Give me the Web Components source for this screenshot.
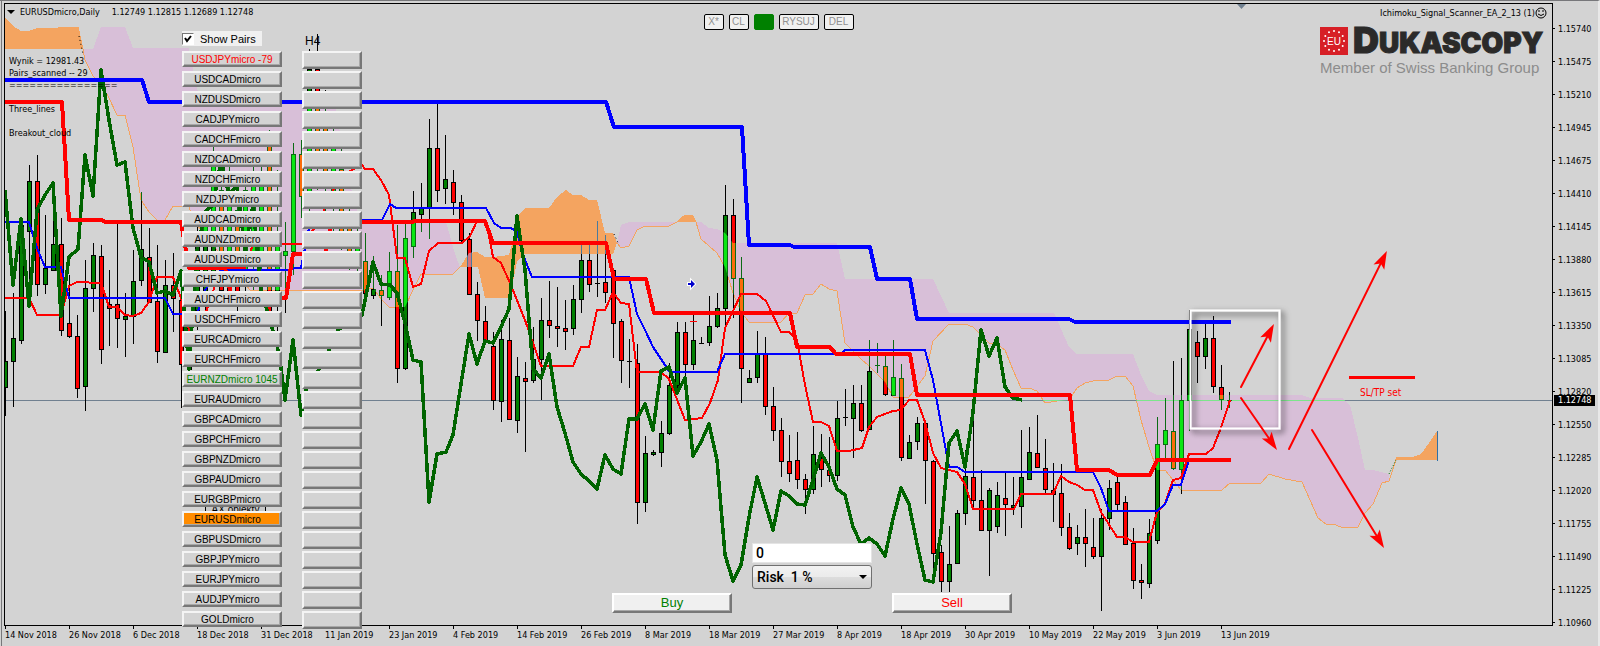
<!DOCTYPE html>
<html lang="en">
<head>
<meta charset="utf-8">
<title>EURUSDmicro,Daily</title>
<style>
  html, body { height: 100%; }
  body {
    margin: 0;
    background: #d3d3d3;
    color: #000;
    font: 9px/12px "DejaVu Sans Condensed", "Noto Sans", sans-serif;
  }
</style>
</head>
<body>
<chart-window>
  <price-chart slot="plot"></price-chart>
  <chart-title slot="title" symbol="EURUSDmicro,Daily" prices="1.12749 1.12815 1.12689 1.12748"></chart-title>
  <chart-comment slot="comment"></chart-comment>
  <pair-list slot="pairs"></pair-list>
  <object-toolbar slot="toolbar"></object-toolbar>
  <order-panel slot="order"></order-panel>
  <broker-logo slot="logo" advisor="Ichimoku_Signal_Scanner_EA_2_13 (1)"></broker-logo>
  <price-axis slot="prices" current="1.12748"></price-axis>
  <time-axis slot="times"></time-axis>
</chart-window>

<script>
class BaseElement extends HTMLElement {
  constructor() {
    super();
    this.attachShadow({ mode: 'open' });
  }

  connectedCallback() {
    this.shadowRoot.innerHTML = `<style>${this.styles}</style>${this.createHTML()}`;
  }
}

class ChartWindow extends BaseElement {
  get styles() {
    return `
      :host {
        display: grid;
        grid-template-columns: minmax(0, 1fr) 45px;
        grid-template-rows: minmax(0, 1fr) 20px;
        box-sizing: border-box;
        min-height: 100vh;
        padding: 3px 0 0 5px;
        border-top: 1px solid #77777a;
        border-right: 2px solid #e8e8e8;
        position: relative;
      }
      :host::before {
        content: '';
        position: absolute;
        inset: 0 auto 0 1px;
        border-left: 1px solid #77777a;
      }
      .plot {
        position: relative;
        border: 1px solid #000;
        margin-top: -1px;
        margin-left: -1px;
      }
      .layer { position: absolute; }
      .plot-area { inset: 0; }
      .title { left: 2px; top: 2px; }
      .comment { left: 4px; top: 51px; }
      .pairs { left: 177px; top: 27px; }
      .toolbar { left: 0; right: 0; top: 10px; }
      .order { left: 607px; top: 539px; }
      .logo { right: 5px; top: 2px; }
      .prices { grid-row: 1 / 3; grid-column: 2; }
    `;
  }

  createHTML() {
    return `
      <div class="plot">
        <div class="layer plot-area"><slot name="plot"></slot></div>
        <div class="layer title"><slot name="title"></slot></div>
        <div class="layer comment"><slot name="comment"></slot></div>
        <div class="layer toolbar"><slot name="toolbar"></slot></div>
        <div class="layer pairs"><slot name="pairs"></slot></div>
        <div class="layer order"><slot name="order"></slot></div>
        <div class="layer logo"><slot name="logo"></slot></div>
      </div>
      <div class="prices"><slot name="prices"></slot></div>
      <div><slot name="times"></slot></div>
    `;
  }
}

class ChartTitle extends BaseElement {
  get styles() {
    return `
      :host { display: flex; align-items: center; white-space: nowrap; }
      svg { width: 8px; height: 4px; margin-right: 5px; }
      .symbol { margin-right: 12px; }
    `;
  }

  createHTML() {
    return `
      <svg viewBox="0 0 8 4"><path d="M0 0h8L4 4z"/></svg>
      <span class="symbol">${this.getAttribute('symbol')}</span>
      <span>${this.getAttribute('prices')}</span>
    `;
  }
}

class ChartComment extends BaseElement {
  get styles() {
    return `
      :host { display: grid; grid-auto-rows: 12px; white-space: pre; }
    `;
  }

  createHTML() {
    const lines = ['Wynik = 12981.43', 'Pairs_scanned -- 29', '='.repeat(16), '', 'Three_lines', '', 'Breakout_cloud'];
    return lines.map((line) => `<span>${line}</span>`).join('');
  }
}

class PairList extends BaseElement {
  get styles() {
    return `
      :host {
        display: grid;
        grid-template-columns: 100px 60px;
        column-gap: 20px;
        row-gap: 4px;
        font: 10px/12px "Liberation Sans", Arial, sans-serif;
        position: relative;
      }
      label {
        display: flex;
        align-items: center;
        gap: 6px;
        width: 80px;
        height: 15px;
        font-size: 11px;
        background: #f0f0f0;
      }
      input {
        appearance: none;
        box-sizing: border-box;
        width: 12px;
        height: 12px;
        margin: 0;
        border: 1px solid;
        border-color: #777 #fff #fff #777;
        background: #fff url("data:image/svg+xml,%3Csvg xmlns='http://www.w3.org/2000/svg' viewBox='0 0 10 10'%3E%3Cpath d='M2 4l2 3 4-5' fill='none' stroke='%23000' stroke-width='2'/%3E%3C/svg%3E");
      }
      .head { height: 16px; }
      .frame { align-self: end; padding-left: 3px; font-size: 12px; }
      ul { display: grid; margin: 0; padding: 0; list-style: none; grid-auto-rows: 20px; }
      .pairs { position: relative; }
      button {
        display: block;
        box-sizing: border-box;
        width: 100%;
        height: 16px;
        padding: 1px 9px 0 0;
        border: 2px solid;
        border-color: #f4f4f4 #777 #777 #f4f4f4;
        background: #d3d3d3;
        box-shadow: inset -1px -1px #a8a8a8;
        color: #000;
        font: inherit;
        white-space: nowrap;
      }
      .signal button { height: 18px; }
      .sell, .buy { padding-right: 0; }
      .sell { color: #f00; }
      .buy { color: #008000; }
      .current { background: #ff8c00; }
      .hidden-objects {
        position: absolute;
        left: 23px;
        top: 471px;
        width: 61px;
        padding: 0;
        border: 1px solid #000;
        background: #c8c8c8;
        box-shadow: none;
      }
    `;
  }

  createHTML() {
    const pairs = [
      'USDJPY', 'USDCAD', 'NZDUSD', 'CADJPY', 'CADCHF', 'NZDCAD', 'NZDCHF', 'NZDJPY', 'AUDCAD', 'AUDNZD',
      'AUDUSD', 'CHFJPY', 'AUDCHF', 'USDCHF', 'EURCAD', 'EURCHF', 'EURNZD', 'EURAUD', 'GBPCAD', 'GBPCHF',
      'GBPNZD', 'GBPAUD', 'EURGBP', 'EURUSD', 'GBPUSD', 'GBPJPY', 'EURJPY', 'AUDJPY', 'GOLD',
    ];
    const states = {
      USDJPY: ['sell', ' -79'],
      EURNZD: ['buy', ' 1045'],
      EURUSD: ['current', ''],
    };
    const items = pairs.map((pair) => {
      const [state, points] = states[pair] || ['', ''];
      return `<li><button class="${state}">${pair}micro${points}</button></li>`;
    });
    const signals = pairs.map((pair) => `<li class="signal"><button aria-label="${pair} H4"></button></li>`);
    return `
      <button class="hidden-objects" tabindex="-1">AX obiekty</button>
      <div class="head"><label for="show"><input id="show" type="checkbox" checked>Show Pairs</label></div>
      <span class="frame">H4</span>
      <ul class="pairs">${items.join('')}</ul>
      <ul>${signals.join('')}</ul>
    `;
  }
}

class ObjectToolbar extends BaseElement {
  get styles() {
    return `
      :host { display: flex; justify-content: center; gap: 5px; }
      button {
        box-sizing: border-box;
        width: 20px;
        height: 16px;
        padding: 0;
        border: 1px solid #000;
        border-radius: 2px;
        background: #f0f0f0;
        color: #909090;
        font: 10px/12px "Liberation Sans", Arial, sans-serif;
      }
      .wide { width: 40px; }
      .mid { width: 30px; }
      .on { background: #008000; border-color: #008000; }
    `;
  }

  createHTML() {
    return `
      <button>X*</button>
      <button>CL</button>
      <button class="on" aria-label="on"></button>
      <button class="wide">RYSUJ</button>
      <button class="mid">DEL</button>
    `;
  }
}

class OrderPanel extends BaseElement {
  get styles() {
    return `
      :host {
        display: grid;
        grid-template-columns: repeat(3, 120px);
        grid-template-rows: 20px 24px 22px;
        column-gap: 20px;
        row-gap: 2px;
        font: 500 14px/18px Roboto, sans-serif;
      }
      input, select {
        grid-column: 2;
        box-sizing: border-box;
        width: 100%;
        margin: 0;
        padding: 0 4px;
        color: #000;
        font: inherit;
      }
      input { border: 1px solid #e4e4e4; background: #fff; padding: 0 3px; }
      select {
        appearance: none;
        border: 1px solid #707070;
        border-radius: 3px;
        background:
          url("data:image/svg+xml,%3Csvg xmlns='http://www.w3.org/2000/svg' viewBox='0 0 8 4'%3E%3Cpath d='M0 0h8L4 4z'/%3E%3C/svg%3E") right 4px center / 8px 4px no-repeat,
          linear-gradient(#f2f2f2, #ebebeb 50%, #dddddd 50%, #cfcfcf);
      }
      button {
        grid-row: 3;
        align-self: end;
        box-sizing: border-box;
        height: 20px;
        padding: 0;
        border: 2px solid;
        border-color: #fff #777 #777 #fff;
        background: #f0f0f0;
        box-shadow: inset -1px -1px #a8a8a8;
        font: 13px/16px "Liberation Sans", Arial, sans-serif;
      }
      .buy { grid-column: 1; color: #008000; }
      .sell { grid-column: 3; color: #f00; }
    `;
  }

  createHTML() {
    return `
      <input type="text" value="0" aria-label="Lots">
      <select aria-label="Risk"><option>Risk&nbsp; 1 %</option></select>
      <button class="buy">Buy</button>
      <button class="sell">Sell</button>
    `;
  }
}

class BrokerLogo extends BaseElement {
  get styles() {
    return `
      :host { display: grid; width: 227px; row-gap: 8px; }
      .advisor { display: flex; justify-content: flex-end; align-items: center; height: 13px; }
      .face { width: 12px; height: 12px; }
      .brand { display: flex; align-items: center; gap: 5px; height: 28px; }
      .flag { flex: none; width: 28px; height: 28px; }
      .name {
        color: #2b2a29;
        font: 900 28px/28px Inter, "Open Sans", sans-serif;
        -webkit-text-stroke: 1px #2b2a29;
        white-space: nowrap;
      }
      .name::first-letter { font-size: 36px; }
      .member {
        color: #8c8c8c;
        font: 15px/18px "Liberation Sans", Arial, sans-serif;
        margin-top: -4px;
      }
    `;
  }

  createHTML() {
    const stars = Array.from({ length: 12 }, (_, i) => {
      const angle = i * Math.PI / 6;
      return `<circle cx="${(14 + 10 * Math.sin(angle)).toFixed(1)}" cy="${(14 - 10 * Math.cos(angle)).toFixed(1)}" r="1"/>`;
    });
    return `
      <div class="advisor">
        ${this.getAttribute('advisor')}
        <svg class="face" viewBox="0 0 12 12" fill="none" stroke="#000">
          <circle cx="6" cy="6" r="5"/>
          <path d="M4 3v2M8 3v2M3 7q3 3 6 0"/>
        </svg>
      </div>
      <div class="brand">
        <svg class="flag" viewBox="0 0 28 28">
          <rect width="28" height="28" fill="#d71f26"/>
          <g fill="#fff">${stars.join('')}</g>
          <text x="14" y="18" text-anchor="middle" fill="#fff" font-family="Liberation Sans" font-size="10">EU</text>
        </svg>
        <div class="name">DUKASCOPY</div>
      </div>
      <div class="member">Member of Swiss Banking Group</div>
    `;
  }
}

class PriceAxis extends BaseElement {
  get styles() {
    return `
      :host { display: block; position: relative; padding-top: 8px; }
      ol { margin: 0; padding: 0; list-style: none; }
      li { display: flex; align-items: center; gap: 3px; height: 33px; }
      li::before { content: ''; width: 2px; height: 1px; background: #000; }
      .current {
        position: absolute;
        left: 1px;
        top: 391px;
        width: 41px;
        box-sizing: border-box;
        padding-left: 4px;
        line-height: 11px;
        background: #000;
        color: #fff;
      }
    `;
  }

  createHTML() {
    const prices = [
      '1.15740', '1.15475', '1.15210', '1.14945', '1.14675', '1.14410', '1.14145', '1.13880', '1.13615', '1.13350',
      '1.13085', '1.12820', '1.12550', '1.12285', '1.12020', '1.11755', '1.11490', '1.11225', '1.10960',
    ];
    return `
      <ol>${prices.map((price) => `<li>${price}</li>`).join('')}</ol>
      <span class="current">${this.getAttribute('current')}</span>
    `;
  }
}

class TimeAxis extends BaseElement {
  get styles() {
    return `
      ol { display: flex; margin: 0; padding: 0; list-style: none; }
      li { flex: 0 0 64px; white-space: nowrap; }
      li::before { content: ''; display: block; width: 1px; height: 3px; background: #000; }
    `;
  }

  createHTML() {
    const dates = [
      '14 Nov 2018', '26 Nov 2018', '6 Dec 2018', '18 Dec 2018', '31 Dec 2018', '11 Jan 2019', '23 Jan 2019',
      '4 Feb 2019', '14 Feb 2019', '26 Feb 2019', '8 Mar 2019', '18 Mar 2019', '27 Mar 2019', '8 Apr 2019',
      '18 Apr 2019', '30 Apr 2019', '10 May 2019', '22 May 2019', '3 Jun 2019', '13 Jun 2019',
    ];
    return `<ol>${dates.map((date) => `<li>${date}</li>`).join('')}</ol>`;
  }
}

// one bar every 8px from x = 5: high, low, body top, body bottom, direction
const BARS = `
311 416 361 387 g|293 407 338 361 g|218 344 225 340 g|165 298 181 231 g|155 296 181 284 r|215 294 268 284 g|208 271 244 270 g|218 336 244 330 r
275 338 323 336 r|315 398 336 388 r|260 411 288 386 g|243 312 255 288 g|245 364 256 349 r|270 346 304 308 r|224 348 304 318 r|293 357 316 319 g
250 344 281 316 g|192 286 249 280 g|228 303 257 302 r|245 363 301 351 r|260 352 285 352 g|253 332 285 298 r|298 408 300 364 r|318 370 320 369 g
225 330 240 310 g|215 320 225 300 g|147 300 160 285 g|160 305 190 290 r|160 300 200 290 g|190 312 210 300 r|180 305 190 275 g|165 290 185 265 g
160 280 175 255 g|130 325 145 314 r|170 345 245 300 g|222 313 251 255 g|143 275 154 251 g|140 218 154 196 r|49 220 69 200 g|34 190 69 160 r
90 215 128 180 r|120 240 140 200 g|140 250 169 235 r|205 270 215 258 r|225 280 240 260 g|233 297 261 293 r|256 299 289 295 g|275 326 290 295 r
252 300 271 297 g|225 383 271 368 r|223 370 238 368 g|191 258 212 246 g|183 232 208 214 g|119 239 148 207 g|103 202 148 190 r|135 204 179 188 g
170 215 182 202 r|195 244 202 240 r|233 295 239 294 r|282 341 294 320 r|306 341 321 341 r|332 410 346 400 r|320 422 339 401 g|318 420 340 419 r
357 433 376 420 g|362 452 378 381 r|327 383 359 380 g|298 400 320 359 g|281 338 320 325 r|287 347 326 328 r|300 350 328 331 r|285 335 299 328 g
245 313 260 299 g|245 292 260 284 r|221 297 283 284 g|235 303 282 292 r|268 358 270 323 r|319 383 321 360 r|339 388 361 362 g|344 524 363 502 r
436 512 453 502 g|450 456 452 454 g|421 467 433 452 g|363 435 385 433 g|322 394 332 385 g|322 385 332 364 r|315 370 340 364 g|337 344 343 344 g
296 346 326 342 g|293 328 308 326 g|185 330 215 308 g|199 318 215 278 r|257 403 278 368 r|370 383 378 382 g|331 383 354 377 g|337 415 354 406 r
387 441 406 430 r|418 477 430 461 r|435 482 461 473 r|432 489 460 479 r|474 514 479 489 r|426 494 454 489 g|434 487 458 469 r|437 482 470 475 r
401 481 418 475 g|389 426 417 418 g|385 458 403 418 g|385 432 403 430 r|340 430 371 429 g|343 373 365 366 g|356 396 366 394 r|340 396 377 395 g
364 461 378 457 r|435 459 442 458 g|417 450 423 441 g|420 504 423 460 r|460 568 461 553 r|545 592 552 581 r|526 592 564 581 g|510 563 513 563 g
450 525 476 513 g|413 510 477 500 r|470 530 500 530 r|488 576 490 530 g|482 533 495 526 g|473 536 498 504 r|477 515 505 507 g|430 528 477 506 g
427 480 452 479 g|415 468 453 467 r|439 493 468 489 r|463 522 490 494 r|464 536 493 527 r|513 550 527 548 r|525 555 537 543 g|509 567 537 543 r
518 559 547 556 r|509 611 518 556 g|480 530 488 518 g|475 510 482 504 r|496 545 502 544 r|528 589 543 580 r|564 599 580 582 r|519 588 533 583 g
417 544 444 540 g|398 458 430 444 g|361 470 431 468 r|358 494 400 469 g|310 431 329 400 g|331 383 342 356 r|323 369 338 356 g|316 393 338 386 r
365 410 387 399 r|392 408 400 401 g
`.trim().split(/[|\n]/).map((bar) => bar.split(' '));

const LINES = {
  trendBlue: '5,80 142,80 149,102 606,102 614,127 742,127 749,245 790,245 794,247 870,247 877,279 910,279 917,319 1069,319 1075,322 1231,322',
  trendRed: '5,102 62,102 69,220 101,220 106,222 181,222 189,268 225,268 232,298 286,298 293,254 325,254 332,222 412,222 415,221 485,221 493,243 606,243 614,279 646,279 654,313 790,313 797,347 830,347 836,354 910,354 917,395 1070,395 1077,470 1109,470 1117,475 1150,475 1157,460 1231,460',
  kijun: '5,222 29,222 37,248 45,267 61,267 69,298 165,298 173,314 197,314 205,290 221,270 290,270 295,268 301,268 309,228 325,220 382,220 390,204 396,208 486,208 494,223 501,228 511,228 517,232 523,255 532,277 629,277 637,314 645,330 653,347 669,371 672,372 717,372 725,354 840,354 845,350 925,350 933,380 949,467 957,467 965,472 1093,472 1101,488 1109,511 1157,511 1165,504 1173,485 1181,485 1189,460',
  tenkan: '5,298 29,298 37,315 61,315 69,286 77,282 101,283 109,307 117,307 125,315 133,316 141,313 149,302 157,277 173,277 181,298 189,330 205,315 221,268 245,268 253,244 302,244 317,225 333,190 350,171 362,165 365,169 373,169 381,180 389,195 397,258 405,258 413,287 421,284 429,251 438,243 462,243 470,236 477,221 486,221 493,257 501,263 510,283 525,320 541,366 573,366 581,347 589,347 597,310 605,310 613,292 621,303 629,304 637,372 661,372 669,379 685,420 702,418 710,403 718,380 725,328 741,294 757,294 766,301 781,332 789,332 797,340 805,385 813,422 821,422 829,426 837,451 849,451 862,448 869,427 877,417 893,411 901,410 909,400 917,400 925,422 933,453 941,468 957,472 965,484 973,509 1014,509 1021,494 1053,494 1061,476 1069,482 1077,485 1085,490 1093,490 1101,512 1117,537 1125,537 1133,542 1149,542 1157,512 1165,504 1173,480 1181,478 1189,454 1206,454 1213,448 1222,425 1230,400',
  chikou: '5,190 13,285 21,219 29,306 37,210 45,195 53,183 61,316 69,257 78,249 85,155 93,196 101,70 109,120 117,165 125,162 133,228 141,257 149,262 157,293 165,291 173,295 181,271 189,369 197,250 205,212 213,205 221,160 229,195 237,185 245,250 253,205 261,290 270,320 278,350 281,368 285,400 293,340 301,415 306,390 320,368 330,348 338,330 362,315 373,262 381,284 390,285 397,293 405,323 413,360 421,362 429,502 437,454 446,452 453,435 461,384 469,334 477,364 485,341 493,343 501,327 509,309 517,216 525,270 533,369 541,378 549,354 557,407 565,433 573,462 581,474 589,481 597,489 605,455 613,469 621,474 629,419 637,419 645,404 653,430 661,371 669,367 677,393 685,378 693,456 701,442 709,424 717,460 725,555 733,581 741,565 749,517 757,477 765,503 773,530 781,491 789,496 797,504 805,505 813,480 821,453 829,467 837,489 845,495 853,527 861,544 869,538 877,544 885,556 893,519 901,488 909,504 917,544 925,580 933,582 941,532 949,443 957,431 965,467 973,412 981,330 989,356 997,338 1005,387 1013,398 1022,400',
  spanA: '78,27 83,49 85,60 93,76 101,84 109,98 117,115 125,115 133,147 141,200 149,212 157,220 165,220 173,206 189,206 193,220 225,260 250,290 310,290 362,291 373,288 381,299 389,307 405,307 413,290 421,274 453,274 460,267',
  spanA2: '617,243 621,248 629,246 637,230 645,226 669,226 677,222 685,215 693,216 696,222 701,239 717,253 725,267 733,293 741,312 749,322 781,322 789,313 797,313 805,295 813,294 821,284 829,289 837,291 845,343 861,359 869,366 885,382 893,397 909,397 925,376 933,341 949,324 965,324 973,327 989,343 997,344 1005,350 1013,370 1021,388 1029,388 1037,391 1045,403 1057,401 1069,400 1077,388 1085,383 1093,381 1109,380 1117,376 1125,376 1133,386 1141,420 1149,447 1157,470 1165,470 1181,490 1222,490 1230,483 1261,483 1269,474 1285,479 1302,482 1318,518 1326,524 1333,524 1341,527 1358,527 1365,513 1373,504 1382,483 1389,481 1397,457 1413,457',
};

const reversed = (points) => points.split(' ').reverse().join(' ');

const BEAR_CLOUDS = [
  `83,49 93,49 101,27 125,27 133,48 189,48 193,70 200,101 335,101 345,165 360,222 446,222 455,254 ${reversed(LINES.spanA)}`,
  `617,243 621,225 629,222 701,222 709,228 717,229 725,233 733,243 837,243 845,279 933,279 949,313 1054,313 1069,347 1077,354 1133,354 1141,375 1149,391 1157,395 1302,395 1310,398 1342,398 1350,405 1358,438 1365,470 1373,470 1381,472 1389,474 1389,481 ${reversed(LINES.spanA2).replace('1413,457 1397,457 ', '').replace('685,215 ', '').replace('693,216 ', '')}`,
];

const BULL_CLOUDS = [
  '5,18 13,26 21,31 29,31 37,28 78,27 83,49 5,49',
  '460,267 469,253 477,252 485,257 493,257 509,255 513,240 517,216 525,208 549,208 557,197 566,190 573,195 581,195 589,200 597,200 605,233 613,233 617,243 613,254 525,254 517,261 513,282 509,298 485,298 478,267',
  '677,222 685,215 693,216 696,222',
  '1397,457 1413,457 1421,454 1429,443 1437,431 1437,460 1395,460',
];

class PriceChart extends BaseElement {
  get styles() {
    return `
      :host { display: block; height: 100%; }
      svg { display: block; width: 100%; height: 100%; }
      .line { fill: none; stroke-linejoin: round; }
      .px { shape-rendering: crispEdges; }
      text { font-size: 10px; }
    `;
  }

  createBars(edge, up, down) {
    const bars = BARS.map(([high, low, top, bottom, side], i) => {
      const x = 5 + i * 8;
      const height = bottom - top;
      const body = height > 1
        ? `<rect x="${x - 1.5}" y="${+top + 0.5}" width="4" height="${height}" fill="${side === 'g' ? up : down}"/>`
        : `<path d="M${x - 2} ${+top + 0.5}h5"/>`;
      return `<path d="M${x + 0.5} ${high}V${low}"/>${body}`;
    });
    return `<g class="px" stroke="${edge}">${bars.join('')}</g>`;
  }

  createArrow(x1, y1, x2, y2) {
    const angle = Math.atan2(y2 - y1, x2 - x1) * 180 / Math.PI;
    const length = Math.hypot(x2 - x1, y2 - y1);
    return `
      <g transform="translate(${x1} ${y1}) rotate(${angle.toFixed(1)})" fill="#f00">
        <path d="M0 0H${(length - 14).toFixed(0)}" stroke="#f00" stroke-width="2" stroke-linecap="round"/>
        <path d="M${length.toFixed(1)} 0l-18 -6l4 6l-4 6z"/>
      </g>
    `;
  }

  createHTML() {
    const polygons = (list, fill) => list.map((points) => `<polygon points="${points}" fill="${fill}"/>`).join('');
    const line = (name, color, width) => `<polyline class="line px" points="${LINES[name]}" stroke="${color}" stroke-width="${width}"/>`;
    return `
      <svg role="img" aria-label="EURUSD daily chart">
        <defs>
          <clipPath id="bear">${polygons(BEAR_CLOUDS, '#000')}</clipPath>
          <clipPath id="bull">${polygons(BULL_CLOUDS, '#000')}</clipPath>
          <filter id="shadow" x="-20%" y="-20%" width="150%" height="150%">
            <feDropShadow dx="3" dy="3" stdDeviation="3" flood-color="#000" flood-opacity="0.8"/>
          </filter>
        </defs>
        <g transform="translate(-5 -4)">
          <g class="px">${polygons(BEAR_CLOUDS, '#d8bfd8')}${polygons(BULL_CLOUDS, '#f4a460')}</g>
          ${line('spanA', '#f4a460', 1)}
          ${line('spanA2', '#f4a460', 1)}
          <path class="px" d="M5 400.5H3000" stroke="#708090"/>
          <path class="px" d="M5 400.5H3000" stroke="#7de58c" clip-path="url(#bear)"/>
          ${this.createBars('#000', '#008000', '#f00')}
          <g clip-path="url(#bear)">${this.createBars('#0b6b14', '#0be614', '#fb6c0b')}</g>
          <g clip-path="url(#bull)">${this.createBars('#4a7a9c', '#4a9c60', '#d8707c')}</g>
          <path class="px" d="M1437.5 431V461" stroke="#2f70a8"/>
          <path d="M1389 474L1396 460" stroke="#006400" stroke-dasharray="1 2"/>
          <path d="M79 36l4 18M614 234l5 11" stroke="#000" stroke-dasharray="1 3"/>
          ${line('tenkan', '#f00', 2)}
          ${line('kijun', '#00f', 2)}
          ${line('chikou', '#006400', 3.5)}
          ${line('trendBlue', '#00f', 4)}
          ${line('trendRed', '#f00', 4)}
          <path class="px" d="M690 321.5h7" stroke="#f00"/>
          <path d="M688 283h3v-3l4 4l-4 4v-3h-3z" fill="#00c" stroke="#fff" stroke-width="2" paint-order="stroke"/>
          <path d="M1237 4h9l-4.5 5z" fill="#708090"/>
          <rect x="1190.5" y="310.5" width="89" height="118" fill="none" stroke="#fff" stroke-width="2" filter="url(#shadow)"/>
          ${this.createArrow(1241, 387, 1274, 324)}
          ${this.createArrow(1241, 398, 1277, 450)}
          ${this.createArrow(1289, 449, 1387, 251)}
          ${this.createArrow(1312, 430, 1384, 548)}
          <path class="px" d="M1349 377.5H1415" stroke="#f00" stroke-width="3"/>
          <text x="1360" y="396" fill="#f00">SL/TP set</text>
        </g>
      </svg>
    `;
  }
}

customElements.define('chart-window', ChartWindow);
customElements.define('chart-title', ChartTitle);
customElements.define('chart-comment', ChartComment);
customElements.define('pair-list', PairList);
customElements.define('object-toolbar', ObjectToolbar);
customElements.define('order-panel', OrderPanel);
customElements.define('broker-logo', BrokerLogo);
customElements.define('price-axis', PriceAxis);
customElements.define('time-axis', TimeAxis);
customElements.define('price-chart', PriceChart);
</script>
</body>
</html>
